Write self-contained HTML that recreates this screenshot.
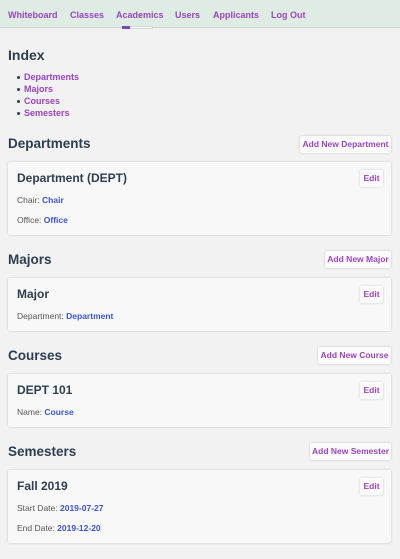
<!DOCTYPE html>
<html><head><style>
*{margin:0;padding:0;box-sizing:border-box}
body{width:400px;height:559px;background:#f2f2f2;font-family:"Liberation Sans",sans-serif;position:relative;overflow:hidden;color:#2d3e50}
.a{position:absolute;white-space:nowrap}
nav{position:absolute;left:0;top:0;width:400px;height:28px;background:#dfece3;border-bottom:1px solid #c5d8cb}
.n{position:absolute;top:10px;font-size:9px;font-weight:bold;color:#9a45c0}
h2{position:absolute;left:8px;font-size:13.5px;font-weight:bold;color:#2d3e50}
.btn{position:absolute;height:17px;background:#fbfbfb;border-radius:2px;box-shadow:0 0 2px rgba(0,0,0,.2);color:#9a45c0;font-size:8.5px;font-weight:bold;line-height:17px;text-align:center}
.card{position:absolute;left:8px;width:383px;background:#f8f8f8;box-shadow:0 0 2px rgba(0,0,0,.2);border-radius:2px}
.t{position:absolute;left:17px;font-size:12px;font-weight:bold}
.l{position:absolute;left:17px;font-size:8.5px;color:#555}
.l b{color:#3b55d4}
ul{position:absolute;left:24px;top:71px;font-size:9px;font-weight:bold;color:#9a45c0;list-style:none}
ul li{height:12px;line-height:12px;position:relative}
ul li:before{content:"";position:absolute;left:-7px;top:5px;width:3px;height:3px;border-radius:50%;background:#2d3e50}
</style></head><body>
<nav>
<span class="n" style="left:8px">Whiteboard</span>
<span class="n" style="left:70px">Classes</span>
<span class="n" style="left:116px">Academics</span>
<span class="n" style="left:175px">Users</span>
<span class="n" style="left:213px">Applicants</span>
<span class="n" style="left:271px">Log Out</span>
<div class="a" style="left:122px;top:26px;width:31px;height:3px;background:#fff;border:1px solid #cfd8d2"></div>
<div class="a" style="left:122px;top:26px;width:8px;height:3px;background:#7a48b0"></div>
</nav>
<h2 style="top:47px;font-size:14px">Index</h2>
<ul><li>Departments</li><li>Majors</li><li>Courses</li><li>Semesters</li></ul>

<h2 style="top:136px">Departments</h2>
<div class="btn" style="left:300px;top:136px;width:91px">Add New Department</div>
<div class="card" style="top:162px;height:73px"></div>
<div class="t" style="top:171px">Department (DEPT)</div>
<div class="btn" style="left:360px;top:170px;width:23px">Edit</div>
<div class="l" style="top:195px">Chair: <b>Chair</b></div>
<div class="l" style="top:215px">Office: <b>Office</b></div>

<h2 style="top:252px">Majors</h2>
<div class="btn" style="left:325px;top:251px;width:66px">Add New Major</div>
<div class="card" style="top:278px;height:53px"></div>
<div class="t" style="top:287px">Major</div>
<div class="btn" style="left:360px;top:286px;width:23px">Edit</div>
<div class="l" style="top:311px">Department: <b>Department</b></div>

<h2 style="top:348px">Courses</h2>
<div class="btn" style="left:318px;top:347px;width:73px">Add New Course</div>
<div class="card" style="top:374px;height:53px"></div>
<div class="t" style="top:383px">DEPT 101</div>
<div class="btn" style="left:360px;top:382px;width:23px">Edit</div>
<div class="l" style="top:407px">Name: <b>Course</b></div>

<h2 style="top:444px">Semesters</h2>
<div class="btn" style="left:310px;top:443px;width:81px">Add New Semester</div>
<div class="card" style="top:470px;height:73px"></div>
<div class="t" style="top:479px">Fall 2019</div>
<div class="btn" style="left:360px;top:478px;width:23px">Edit</div>
<div class="l" style="top:503px">Start Date: <b>2019-07-27</b></div>
<div class="l" style="top:523px">End Date: <b>2019-12-20</b></div>
</body></html>
